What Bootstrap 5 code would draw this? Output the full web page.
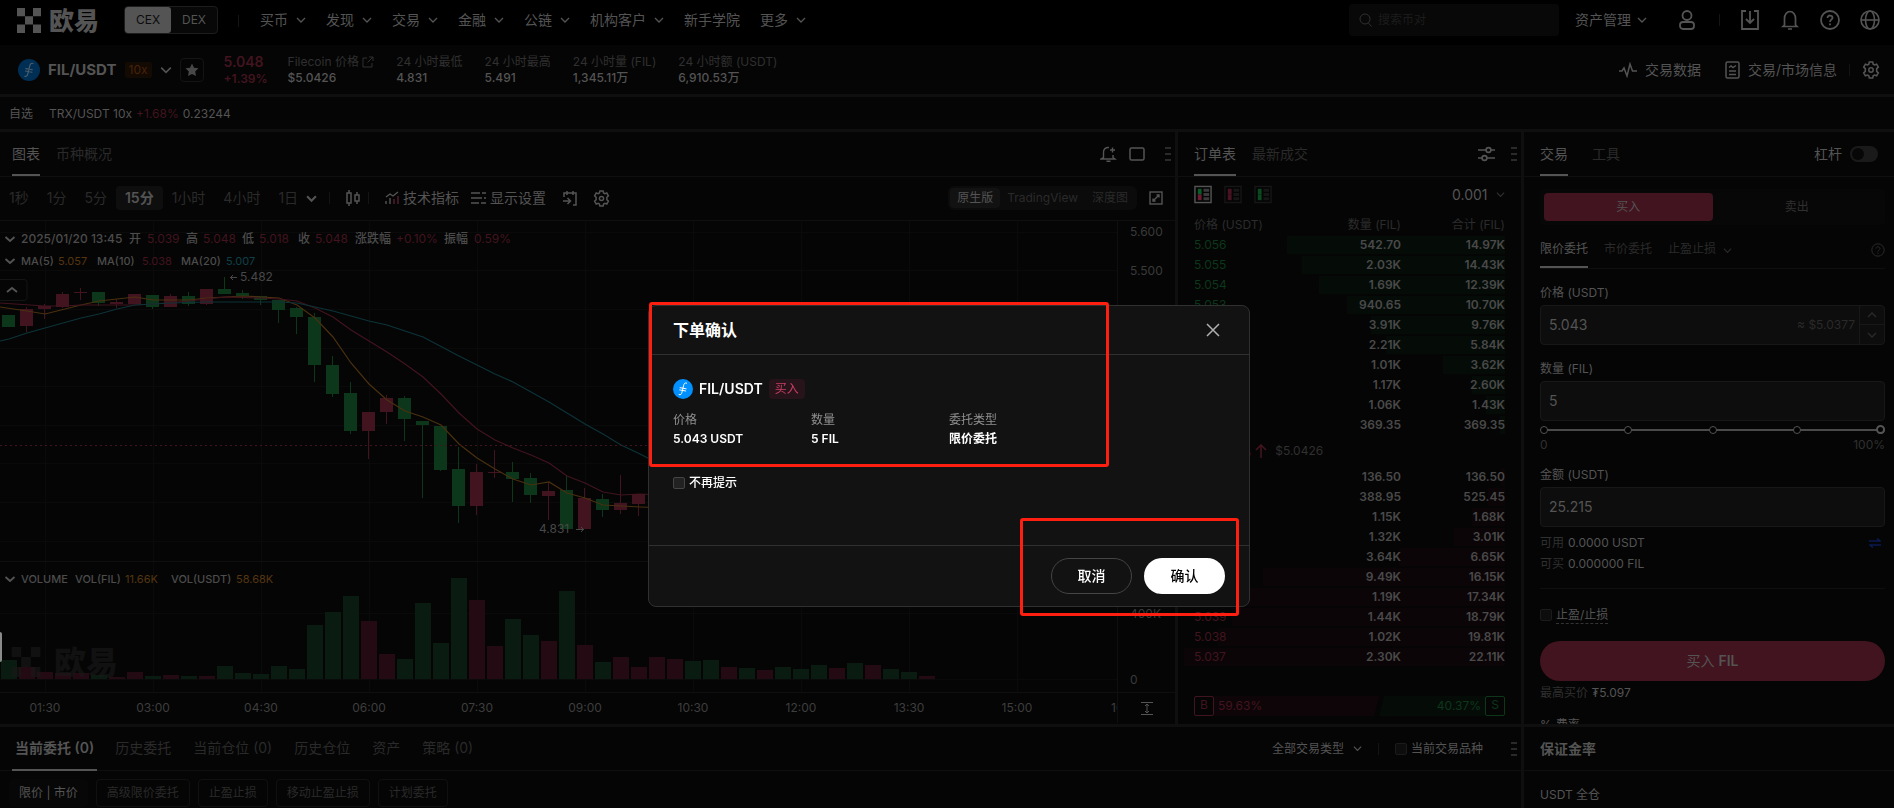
<!DOCTYPE html>
<html lang="zh-CN" data-bs-theme="dark">
<head>
<meta charset="utf-8">
<meta name="viewport" content="width=device-width, initial-scale=1">
<title>FIL/USDT 现货交易 | 欧易</title>
<link href="https://cdn.jsdelivr.net/npm/bootstrap@5.3.0/dist/css/bootstrap.min.css" rel="stylesheet">
<style>
:root{--t1:#545454;--t2:#303030;--t3:#2a2a2a;--line:#0f0f0f;--panel:#050505;--field:#0d0d0d;--up:#42141f;--down:#0c371a}
body{font:400 12px/16px Inter,"Noto Sans CJK SC",sans-serif;color:var(--t1);background:var(--line)}
button,input,select{font:inherit;color:inherit;background:none;border:0;padding:0;margin:0;outline:0}
h1,h2{color:inherit}
a{color:inherit;text-decoration:none}
svg{fill:none;flex:none}
svg:not([stroke]){stroke:currentColor}
.t2{color:var(--t2)}.t3{color:var(--t3)}.up{color:var(--up)}.down{color:var(--down)}
.f14{font-size:14px;line-height:20px}
.semi{font-weight:600}.med{font-weight:500}
.panel{background:var(--panel)}
.gap3{gap:3px}.gap6{gap:6px}.gap12{gap:12px}.gap18{gap:18px}.gap20{gap:20px}.gap22{gap:22px}
.vline{width:1px;height:12px;background:#141414}
.topbar{height:45px;background:#000;padding:0 14px 12px 17px}
.brand-word{font-size:25px;line-height:26px;font-weight:900;color:#545454}
.venue{border:1px solid #1d1d1d;border-radius:4px;background:#080808;height:28px;margin:6px 20px 0 25px}
.venue button{width:46px;color:var(--t1)}
.venue .on{background:#545454;color:#0c0c0c;border-radius:3px}
.search{width:210px;height:32px;background:#080808;border-radius:4px;padding:0 10px}
.search input::placeholder{color:#1c1c1c}
.topnav{padding:6px 0 0 5px}
.toptools{padding-top:6px}
.ticker{height:50px;padding:0 14px 0 18px}
.pairname{font-size:15px;font-weight:700}
.lev{background:#120a03;color:#4a2208;border-radius:2px;padding:0 4px}
.starbox{width:24px;height:24px;border:1px solid #141414;border-radius:4px}
.lastprice{margin:0 20px 0 4px}
.favs{height:32px;padding:1px 9px 0;margin:3px 0}
.tabs{height:44px;border-bottom:1px solid var(--line);font-size:14px;line-height:20px}
main .tabs,main .tab{height:45px}
main .tab{padding-top:2px}
.tab{height:44px;border-bottom:2px solid transparent;color:#2a2a2a;padding:0}
.tab.on{color:var(--t1);border-color:var(--t1)}
.toolbar{height:44px;border-bottom:1px solid var(--line);padding:0 12px 0 9px;font-size:14px;line-height:20px}
.spans .on{background:#0e0e0e;border-radius:4px;padding:2px 9px;margin:0 -9px;font-weight:600;color:var(--t1)}
.seg{background:#0b0b0b;border-radius:6px;padding:2px;height:24px}
.seg button{padding:0 7px;border-radius:4px;height:20px;font-size:12px;line-height:16px;color:#2a2a2a}
.seg .on{background:#121212;color:var(--t1)}
.plot svg text{stroke:none;font-size:12px}
.plot svg .small-leg text{font-size:11px}
.axis{width:58px;border-left:1px solid var(--line)}
.book{width:343px}
.trade{width:370px}
.booktable{width:323px;margin:9px 16px 0 4px;table-layout:fixed}
.booktable th{font-weight:400;color:#2c2c2c;height:22px;padding:0}
.booktable th:not(:first-child){width:104px}
.booktable td{height:20px;padding:0 0 2px;font-weight:600;color:#4a4a4a}
.booktable th:first-child,.booktable td:first-child{padding-left:12px;font-weight:400}
.booktable td:not(:first-child),.booktable th:not(:first-child){text-align:right}
.depth{background-repeat:no-repeat;background-position:right top;background-size:var(--w) 18px}
.ask{background-image:linear-gradient(#050c08,#050c08)}
.bid{background-image:linear-gradient(#0c0508,#0c0508)}
.ask td:first-child{color:var(--down)}.bid td:first-child{color:var(--up)}
.booktable .mid td{height:32px;font-weight:400}
.bs{width:20px;height:20px;border:1px solid;border-radius:2px}
.buyfill{background:#0e0508;clip-path:polygon(0 0,100% 0,calc(100% - 5px) 100%,0 100%)}
.sellfill{background:#050c08;clip-path:polygon(5px 0,100% 0,100% 100%,0 100%)}
.form{padding:12px 9px 0 16px}
.sides{background:#070707;border-radius:4px;padding:4px;height:36px}
.sides .on{background:var(--up);border-radius:4px}
.kinds{height:36px;margin-top:8px;border-bottom:1px solid var(--line)}
.kinds button{height:36px;border-bottom:2px solid transparent;color:#2a2a2a}
.kinds .on{color:var(--t1);border-color:var(--t1)}
.field{height:40px;background:var(--field);border:1px solid #181818;border-radius:4px;margin-top:4px}
.field input{padding-left:8px;font-size:14px;min-width:0}
.spin{width:25px;border-left:1px solid #181818;color:#2a2a2a}
.spin button+button{border-top:1px solid #181818}
.slider{height:18px}
.slider::before{content:"";position:absolute;left:4px;right:4px;top:8px;height:2px;background:#4a4a4a}
.slider i{position:relative;width:8px;height:8px;border:1px solid #545454;border-radius:50%;background:#000}
.slider input{position:absolute;inset:0;width:100%;height:18px;appearance:none}
.slider input::-webkit-slider-thumb{appearance:none;width:9px;height:9px;border-radius:50%;background:#000;border:2px solid #545454}
.tick{appearance:none;width:12px;height:12px;border:1px solid #1b1b1b;border-radius:2px;background:var(--field)}
.dash{border-bottom:1px dashed #333}
.submit{height:40px;border-radius:20px;background:var(--up);font-size:14px;margin-top:17px}
.toggle{appearance:none;width:28px;height:16px;border-radius:8px;background:#1a1a1a;padding:2px}
.toggle::before{content:"";display:block;width:12px;height:12px;border-radius:50%;background:#070707}
.ordertabs{gap:22px}
.ordertabs .on{padding:0 3px;margin-right:-4px}
.chips{padding:8px 9px 1px}
.chips button{height:28px;border:1px solid #101010;border-radius:4px;padding:0 10px;color:#2a2a2a}
.chips .on{background:#070707;border-color:#070707;color:var(--t1);padding:0 9px}
.pick{appearance:none}
.edge{left:0;top:632px;width:2px;height:30px;background:#8a8a8a;border-radius:0 2px 2px 0}
.modal{padding-left:4px;color:#fff}
.modal-dialog{max-width:602px;margin-top:305px}
.modal-content{background:#121212;border:1px solid #303030;border-radius:8px}
.modal-header{height:49px;padding:0 29px 0 24px;border-bottom:1px solid #303030;border-radius:0}
.modal-title{font-size:16px;line-height:24px;font-weight:700}
.modal-body{height:190px;padding:24px;flex:none}
.modal-footer{height:61px;padding:0 24px;gap:12px;border-top:1px solid #303030}
.modal-footer button{width:81px;height:36px;border-radius:18px;margin:0}
.side-tag{background:#27131a;color:#ca3f64;border-radius:4px;padding:2px 6px}
.facts{grid-template-columns:138px 138px 138px;column-gap:0;row-gap:3px;margin-top:13px}
.facts dt{font-weight:400;color:#909090}.facts dd{margin:0;font-weight:600;grid-row:2}
.modal .tick{border-color:#454545;background:#222}
.frame{border:3px solid #ff1f10;border-radius:3px;pointer-events:none}
.frame-info{left:0;top:-4px;width:460px;height:165px}
.frame-act{right:10px;bottom:-10px;width:219px;height:98px}
</style>
</head>
<body class="vh-100 overflow-hidden">
<svg width="0" height="0" class="position-absolute">
 <symbol id="chev" viewBox="0 0 10 10"><path d="M1 3l4 4 4-4" stroke-width="1.3"/></symbol>
 <symbol id="chevb" viewBox="0 0 10 10"><path d="M1 3l4 4 4-4" stroke-width="1.9"/></symbol>
 <symbol id="gear" viewBox="0 0 18 18"><path d="M7.3 1h3.4l.5 2.2 1.3.7 2.1-.7 1.7 2.9L14.700 7.700v2.600l1.600 1.600-1.700 2.900-2.100-.7-1.300.7-.5 2.200H7.300l-.5-2.200-1.300-.7-2.100.7-1.700-2.900 1.600-1.600V7.700L1.700 6.100l1.700-2.900 2.100.7 1.300-.7z" stroke-width="1.6"/><circle cx="9" cy="9" r="2.200" stroke-width="1.500"/></symbol>
 <symbol id="fil" viewBox="0 0 22 22"><circle cx="11" cy="11" r="11" fill="var(--disc)" stroke="none"/><path d="M15 4.500c-2-.8-2.900.5-3.400 3l-1.700 7c-.5 2.200-1.400 3.400-3.200 2.700M7.800 9.600l6.600 1.200M7.400 12l6.600 1.200" stroke-width="1.100" stroke-linecap="round"/></symbol>
 <symbol id="grip" viewBox="0 0 6 14"><path d="M0 1h6M0 7h6M0 13h6" stroke-width="1.800"/></symbol>
 <symbol id="okmark" viewBox="0 0 24 25"><path d="M0 0h8v8.300H0zM16 0h8v8.300h-8zM8 8.300h8v8.300H8zM0 16.600h8V25H0zM16 16.600h8V25h-8z" fill="currentColor" stroke="none"/></symbol>
</svg>

<div class="d-flex flex-column h-100">
<header class="topbar d-flex align-items-center">
 <a href="#" class="d-flex align-items-center gap-2 pt-2" aria-label="欧易"><svg width="24" height="25"><use href="#okmark"/></svg><span class="brand-word">欧易</span></a>
 <div class="venue d-flex"><button class="on">CEX</button><button>DEX</button></div>
 <span class="vline me-3 mt-2"></span>
 <nav class="topnav d-flex f14 gap20" id="mainnav"></nav>
 <div class="toptools ms-auto d-flex align-items-center">
  <label class="search d-flex align-items-center gap6"><svg width="13" height="14" viewBox="0 0 13 14" class="t2"><circle cx="6" cy="6" r="5"/><path d="M9.500 10l3 3.500"/></svg><input class="w-100" placeholder="搜索币对" aria-label="搜索币对"></label>
  <a href="#" class="f14 d-flex align-items-center gap6 ms-3 me-2">资产管理 <svg width="10" height="10"><use href="#chev"/></svg></a>
  <svg width="16" height="20" viewBox="0 0 16 20" class="ms-4 me-4" stroke="currentColor" stroke-width="1.800"><circle cx="8" cy="5.500" r="4.500"/><rect x="1" y="12" width="14" height="7" rx="3"/></svg>
  <span class="vline"></span>
  <div class="d-flex align-items-center gap20 ps-3 ms-1">
   <svg width="20" height="20" viewBox="0 0 20 20" stroke-width="1.800"><path d="M6 1H2v18h16V1h-4M10 1v12M6 9l4 4 4-4"/></svg>
   <svg width="20" height="20" viewBox="0 0 20 20" stroke-width="1.700"><path d="M4.500 15V8.500a5.500 7 0 0 1 11 0V15l1.500 1.500H3zM8 19h4"/></svg>
   <svg width="20" height="20" viewBox="0 0 20 20" stroke-width="1.800"><circle cx="10" cy="10" r="9"/><path d="M7.500 8c0-3.500 5-3 5-.3 0 1.800-2.500 2-2.500 4.200M10 13.500v1.800"/></svg>
   <svg width="20" height="20" viewBox="0 0 20 20" stroke-width="1.600"><circle cx="10" cy="10" r="9"/><ellipse cx="10" cy="10" rx="4.500" ry="9"/><path d="M1 10h18"/></svg>
  </div>
 </div>
</header>

<section class="ticker panel d-flex align-items-center">
 <svg width="22" height="22" style="--disc:#002f56;color:#4c5c68"><use href="#fil"/></svg>
 <h1 class="pairname m-0 ms-2 lh-1">FIL/USDT</h1><span class="lev ms-2">10x</span>
 <svg width="12" height="12" class="ms-2"><use href="#chev"/></svg>
 <button class="starbox ms-2 me-3 d-flex align-items-center justify-content-center" aria-label="收藏"><svg width="14" height="14" viewBox="0 0 14 14"><path d="M7 .5l2 4.200 4.500.6-3.300 3.200.8 4.600L7 11l-4 2.100.8-4.600L.5 5.300 5 4.700z" fill="#484848" stroke="none"/></svg></button>
 <div class="lastprice up semi"><div class="f14 lh-1 mb-1">5.048</div><div class="lh-1">+1.39%</div></div>
 <div class="d-flex gap22" id="stats"></div>
 <div class="ms-auto d-flex align-items-center f14">
  <svg width="18" height="16" viewBox="0 0 18 16" stroke-width="1.500"><path d="M0 9h3l2-3 3 8 3-12 2.500 7H18"/></svg><a href="#" class="ms-2 me-4">交易数据</a>
  <svg width="15" height="18" viewBox="0 0 15 18" stroke-width="1.500"><rect x="1" y="1" width="13" height="16" rx="1.500"/><path d="M4 6.500l2-1.500 2 1.500L11 4.500M4 10h7M4 13.500h7"/></svg><a href="#" class="ms-2 me-1">交易/市场信息</a>
  <span class="vline mx-2"></span><svg width="18" height="18" class="ms-1"><use href="#gear"/></svg>
 </div>
</section>

<section class="favs panel d-flex align-items-center gap-3"><span>自选</span><a href="#" class="d-flex gap-1"><span>TRX/USDT 10x</span><span class="up">+1.68%</span><span>0.23244</span></a></section>

<main class="d-flex gap3 flex-fill overflow-hidden" style="min-height:0">
 <section class="panel flex-fill d-flex flex-column overflow-hidden">
  <div class="tabs d-flex align-items-center ps-2"><div class="d-flex gap-3 ps-1"><button class="tab on">图表</button><button class="tab">币种概况</button></div>
   <div class="ms-auto d-flex align-items-center gap12 pe-1">
    <svg width="17" height="16" viewBox="0 0 17 16" stroke-width="1.400"><path d="M9 1.500C5.500 1 3.500 3.500 3.500 6v5.500L1 13h14l-2-1.500V9M6.500 15.200h4M12.500 1.500v5M10 4h5"/></svg>
    <svg width="16" height="14" viewBox="0 0 16 14" stroke-width="1.500"><rect x="1" y="1" width="14" height="12" rx="1.500"/></svg>
    <svg width="6" height="14" class="t3 ms-2"><use href="#grip"/></svg></div></div>
  <div class="toolbar d-flex align-items-center">
   <div class="spans d-flex gap18 t3 align-items-center"><button>1秒</button><button>1分</button><button>5分</button><button class="on">15分</button><button>1小时</button><button>4小时</button><button>1日</button></div>
   <svg width="11" height="11" class="ms-2 me-2"><use href="#chevb"/></svg><span class="vline ms-1"></span>
   <svg width="14" height="16" viewBox="0 0 14 16" class="ms-3 me-2" stroke-width="1.500"><path d="M3 0v3M3 13v3M11 2v3M11 11v3"/><rect x="1" y="3" width="4" height="10"/><rect x="9" y="5" width="4" height="6"/></svg><span class="vline"></span>
   <button class="ms-3 d-flex align-items-center gap-1"><svg width="14" height="14" viewBox="0 0 14 14" stroke-width="1.400"><path d="M1 6l4-3 3 2 5-4M1 13v-3M5 13V7"/><path d="M9 13V8M13 13V5" stroke="#54202e"/></svg>技术指标</button>
   <button class="ms-2 ps-1 d-flex align-items-center gap-1"><svg width="15" height="14" viewBox="0 0 15 14" stroke-width="1.500"><path d="M0 2h9M11 2h4M0 7h11M13 7h2M0 12h8M10 12h5"/></svg>显示设置</button>
   <svg width="15" height="15" viewBox="0 0 15 15" class="mx-3" stroke-width="1.500"><path d="M2 6V2h12v12h-3M5 0v4M11 0v4M1 10h7M5.500 7l3 3-3 3"/></svg>
   <svg width="17" height="17"><use href="#gear"/></svg>
   <div class="seg d-flex ms-auto me-2"><button class="on">原生版</button><button>TradingView</button><button>深度图</button></div>
   <svg width="14" height="14" viewBox="0 0 14 14" class="ms-1" stroke-width="1.400"><rect x="1" y="1" width="12" height="12"/><path d="M7.500 4H10v2.500M4 7.500V10h2.500M10 4L4 10"/></svg>
  </div>
  <div class="plot d-flex flex-fill">
   <svg id="chart" class="flex-fill" width="100" height="502" role="img" aria-label="FIL/USDT 15分钟 K线图" style="overflow:hidden"></svg>
   <svg class="axis" width="58" height="502"><g fill="#3a3a3a"><text x="12" y="15">5.600</text><text x="12" y="54">5.500</text><text x="12" y="397">400K</text><text x="12" y="463">0</text></g><path d="M0 471.500h58" stroke="#0f0f0f"/><path d="M23 481.500h12M23 493.500h12M29 483v9M27 485l2-2 2 2M27 490l2 2 2-2" stroke="#545454"/></svg>
  </div>
 </section>

 <section class="panel book d-flex flex-column">
  <div class="tabs d-flex align-items-center ps-3 pe-1"><button class="tab on">订单表</button><button class="tab ms-3">最新成交</button>
   <svg width="17" height="16" viewBox="0 0 17 16" class="ms-auto me-3" stroke-width="1.600"><path d="M0 4h8M13 4h4M0 12h4M9 12h8"/><circle cx="10.500" cy="4" r="2.400"/><circle cx="6.500" cy="12" r="2.400"/></svg><svg width="6" height="14" class="t3"><use href="#grip"/></svg></div>
  <div class="d-flex align-items-center px-3 pt-2"><div class="d-flex gap-2" id="views"></div>
   <label class="ms-auto d-flex align-items-center f14 gap-2"><select class="pick" aria-label="价格精度"><option>0.001</option></select><svg width="9" height="9" class="t2"><use href="#chev"/></svg></label></div>
  <table class="booktable"><thead><tr><th>价格 (USDT)</th><th>数量 (FIL)</th><th>合计 (FIL)</th></tr></thead><tbody id="book"></tbody></table>
  <div class="d-flex px-3 mt-auto mb-2"><span class="bs up text-center">B</span><span class="buyfill up flex-fill ps-1 pt-1 lh-1">59.63%</span><span class="sellfill down text-end pe-1 pt-1 lh-1" style="width:34%">40.37%</span><span class="bs down text-center">S</span></div>
 </section>

 <section class="panel trade overflow-hidden">
  <div class="tabs d-flex align-items-center ps-3"><button class="tab on">交易</button><button class="tab ms-4">工具</button>
   <label class="ms-auto d-flex align-items-center gap-2 me-3">杠杆<input type="checkbox" class="toggle"></label></div>
  <form class="form" onsubmit="return false">
   <div class="sides d-flex"><button class="on flex-fill w-50">买入</button><button class="flex-fill w-50 t2">卖出</button></div>
   <div class="kinds d-flex align-items-center gap-3"><button class="on">限价委托</button><button>市价委托</button><button>止盈止损 <svg width="9" height="9" class="ms-1"><use href="#chev"/></svg></button>
    <svg class="ms-auto t3" width="14" height="14" viewBox="0 0 14 14"><circle cx="7" cy="7" r="6.200"/><path d="M5 5.500c0-2.500 4-2 4 0 0 1.200-2 1.500-2 3M7 9.500v1.300"/></svg></div>
   <label for="price" class="d-block mt-3">价格 (USDT)</label>
   <div class="field d-flex align-items-center"><input id="price" class="flex-fill" value="5.043"><span class="t3 pe-1">≈ $5.0377</span>
    <div class="spin d-flex flex-column h-100"><button class="flex-fill" aria-label="增加"><svg width="10" height="10" class="d-block mx-auto" style="transform:rotate(180deg)"><use href="#chev"/></svg></button><button class="flex-fill" aria-label="减少"><svg width="10" height="10" class="d-block mx-auto"><use href="#chev"/></svg></button></div></div>
   <label for="qty" class="d-block mt-3">数量 (FIL)</label>
   <div class="field d-flex"><input id="qty" class="w-100" value="5"></div>
   <div class="slider d-flex justify-content-between align-items-center position-relative"><i></i><i></i><i></i><i></i><i></i><input type="range" value="100" aria-label="数量比例"></div>
   <div class="d-flex justify-content-between t2 pb-1" style="line-height:12px"><span>0</span><span>100%</span></div>
   <label for="amt" class="d-block" style="margin-top:12px">金额 (USDT)</label>
   <div class="field d-flex"><input id="amt" class="w-100" value="25.215"></div>
   <div class="d-flex mt-2 align-items-center"><span class="t2 me-1">可用</span>0.0000 USDT<svg width="12" height="10" viewBox="0 0 12 10" class="ms-auto me-1" stroke="#0a1a52" stroke-width="1.500"><path d="M0 3h11L8 .5M12 7H1l3 2.500"/></svg></div>
   <div class="d-flex" style="margin-top:5px"><span class="t2 me-1">可买</span>0.000000 FIL</div>
   <hr class="my-3 opacity-100" style="border-color:#0f0f0f">
   <label class="d-flex align-items-center gap-1" style="padding-top:2px"><input type="checkbox" class="tick"><span class="dash">止盈/止损</span></label>
   <button class="submit w-100">买入 <span class="semi">FIL</span></button>
   <div class="mt-1"><span class="t2">最高买价</span> ₮5.097</div>
   <div class="mt-3 d-flex"><span class="me-1">%</span>费率</div>
  </form>
 </section>
</main>

<footer class="d-flex gap3" style="margin-top:3px">
 <section class="panel flex-fill">
  <div class="tabs d-flex align-items-center ps-2 pe-1">
   <div class="ordertabs d-flex ps-1" id="ordertabs"></div>
   <label class="ms-auto d-flex align-items-center gap-2" style="font-size:12px"><select class="pick" aria-label="交易类型"><option>全部交易类型</option></select><svg width="9" height="9"><use href="#chev"/></svg></label>
   <span class="vline mx-3"></span><label class="d-flex align-items-center gap-1 me-4 pe-1" style="font-size:12px"><input type="checkbox" class="tick">当前交易品种</label><svg width="6" height="14" class="t3"><use href="#grip"/></svg></div>
  <div class="chips d-flex gap-2"><button class="on">限价 | 市价</button><button>高级限价委托</button><button>止盈止损</button><button>移动止盈止损</button><button>计划委托</button></div>
 </section>
 <section class="panel trade"><h2 class="tabs d-flex align-items-center m-0 ps-3 semi">保证金率</h2><div class="ps-3 pt-3">USDT 全仓</div></section>
</footer>
</div>
<span class="edge position-absolute"></span>

<div class="modal d-block" tabindex="-1" role="dialog" aria-labelledby="ttl">
 <div class="modal-dialog"><div class="modal-content position-relative">
  <div class="modal-header d-flex justify-content-between"><h2 class="modal-title" id="ttl">下单确认</h2><button aria-label="关闭"><svg width="14" height="14" viewBox="0 0 14 14" class="d-block" stroke="#b0b0b0" stroke-width="1.500"><path d="M1 1l12 12M13 1L1 13"/></svg></button></div>
  <div class="modal-body">
   <div class="d-flex align-items-center gap6"><svg width="20" height="20" style="--disc:#0090ff"><use href="#fil"/></svg><span class="f14 semi">FIL/USDT</span><span class="side-tag">买入</span></div>
   <dl class="facts d-grid mb-0"><dt>价格</dt><dd>5.043 USDT</dd><dt>数量</dt><dd>5 FIL</dd><dt>委托类型</dt><dd>限价委托</dd></dl>
   <label class="d-flex align-items-center gap-1 med" style="margin-top:28px"><input type="checkbox" class="tick">不再提示</label>
  </div>
  <div class="modal-footer"><button class="f14 med" style="border:1px solid #454545">取消</button><button class="f14 bg-white text-black med">确认</button></div>
  <span class="frame frame-info position-absolute"></span><span class="frame frame-act position-absolute"></span>
 </div></div>
</div>

<script src="https://cdn.jsdelivr.net/npm/bootstrap@5.3.0/dist/js/bootstrap.bundle.min.js"></script>
<script>
const $ = id => document.getElementById(id), chev = '<svg width="10" height="10"><use href="#chev"/></svg>';
$('mainnav').innerHTML = ['买币','发现','交易','金融','公链','机构客户','新手学院','更多'].map(t =>
  `<a href="#" class="d-flex align-items-center gap-2">${t}${t === '新手学院' ? '' : chev}</a>`).join('');
$('stats').innerHTML = [['Filecoin 价格 <svg width="12" height="12" viewBox="0 0 12 12"><path d="M5 2H1v9h9V7M7 1h4v4M11 1L5.500 6.500"/></svg>','$5.0426'],['24 小时最低','4.831'],['24 小时最高','5.491'],['24 小时量 (FIL)','1,345.11万'],['24 小时额 (USDT)','6,910.53万']]
  .map(([k, v]) => `<div><div class="t2">${k}</div><div class="med">${v}</div></div>`).join('');
$('ordertabs').innerHTML = ['当前委托 (0)','历史委托','当前仓位 (0)','历史仓位','资产','策略 (0)'].map((t, i) =>
  `<button class="tab ${i ? '' : 'on semi'}">${t}</button>`).join('');
$('views').innerHTML = [['#0c5a26','#6b1c32',1],['#4a1322','#4a1322',0],['#0b4a20','#0b4a20',0]].map(([a, b, on]) =>
  `<button class="me-1" aria-label="盘口视图"><svg class="d-block" width="18" height="19" viewBox="0 0 19 19" stroke="none"><rect x="1" y="1" width="17" height="17" stroke="${on ? '#545454' : '#161616'}" stroke-width="1.500"/><path d="M4 3.500h4v6H4z" fill="${a}"/><path d="M4 9.500h4v6H4z" fill="${b}"/><path d="M10 3.500h6v3h-6zM10 8h6v3h-6zM10 12.500h6v3h-6z" fill="${on ? '#3a3a3a' : '#161616'}"/></svg></button>`).join('');

// price, amount, cumulative total, depth bar length
const asks = [['5.056','542.70','14.97K',218],['5.055','2.03K','14.43K',203],['5.054','1.69K','12.39K',186],['5.053','940.65','10.70K',158],['5.052','3.91K','9.76K',134],['5.051','2.21K','5.84K',119],['5.050','1.01K','3.62K',62],['5.049','1.17K','2.60K',33],['5.048','1.06K','1.43K',19],['5.047','369.35','369.35',5]];
const bids = [['5.046','136.50','136.50',4],['5.045','388.95','525.45',17],['5.044','1.15K','1.68K',33],['5.043','1.32K','3.01K',51],['5.042','3.64K','6.65K',106],['5.041','9.49K','16.15K',242],['5.040','1.19K','17.34K',258],['5.039','1.44K','18.79K',273],['5.038','1.02K','19.81K',287],['5.037','2.30K','22.11K',321]];
const rows = (list, cls) => list.map(r => `<tr class="depth ${cls}" style="--w:${r[3]}px"><td>${r[0]}</td><td>${r[1]}</td><td>${r[2]}</td></tr>`).join('');
$('book').innerHTML = rows(asks, 'ask') +
  '<tr class="mid"><td colspan="3"><div class="d-flex align-items-center"><span class="fs-5 lh-1 up semi">5.048</span><svg class="up mx-1 me-2" width="12" height="14" viewBox="0 0 12 14" stroke-width="1.600"><path d="M6 14V1M1 6l5-5 5 5"/></svg><span class="t2">$5.0426</span></div></td></tr>' + rows(bids, 'bid');

// candles: up/down, body top, body bottom, high, low (page rows)
const K = 'g315,327,315,327 r309,326,307,332 r306,309,304,319 r294,307,292,308 r292,293,288,300 g292,303,292,306 r302,304,299,308 r294,304,294,304 g295,307,295,309 r296,307,294,307 g296,304,292,306 r289,304,289,305 g289,294,277,294 g293,296,290,299 g296,300,296,305 g300,310,300,323 g308,317,307,334 g317,365,313,382 g365,394,356,397 g393,431,382,434 r412,431,412,459 r398,412,395,424 g398,419,396,441 g421,425,421,498 g426,470,426,471 g469,506,447,523 r472,506,464,515 r472,473,450,478 g472,479,462,502 g478,495,473,503 r491,496,482,520 g490,529,476,529 r498,529,488,529 g499,510,494,517 r503,510,475,514 r494,504,494,516'.split(' ');
const V = 'g660 r667 r672 r673 r673 g675 r677 r672 g676 r675 g676 r676 g666 g673 g674 g666 g669 g625 g612 g596 r621 r654 g659 g603 g643 g578 r600 r646 g619 g635 r641 g591 r645 g662 r657 r667 r657 r659 g661 g660 r667 g668 r670 g667 g669 g665 r668 g663 r665 g669 g672 r676'.split(' ');
const MA = {
 '#4a3010':'0,307 27,311 45,314 81,305 99,301 117,299 135,297 153,300 189,300 207,298 243,296 279,298 297,305 315,318 333,337 351,363 369,384 387,400 405,411 423,417 441,425 459,444 477,458 495,469 513,479 531,485 549,482 567,493 585,498 603,505 640,507 700,509',
 '#42141f':'0,303 45,306 63,306 81,305 135,305 153,304 189,301 207,299 225,297 261,298 279,299 297,301 315,308 333,317 351,330 387,352 405,364 423,377 441,394 459,413 477,429 495,440 513,448 531,455 549,463 567,476 585,483 603,492 621,495 640,494 700,497',
 '#0d3338':'0,341 9,339 27,333 81,318 99,314 117,309 135,305 153,304 171,303 207,302 279,302 297,303 315,307 333,311 369,321 387,325 423,337 459,356 495,374 513,382 549,402 567,413 585,424 603,434 621,445 640,454 700,485'};
const col = c => c === 'g' ? '#0c371a' : '#42141f', vol = c => c === 'g' ? '#0a1c12' : '#240b13';
let s = '<g transform="translate(0,-221)"><g stroke="#0a0a0a">';
for (let i = 0; i < 10; i++) s += `<path d="M${45 + 108 * i}.500 221V692"/>`;
[232,270,309,348,386,425,463,502,541,613,679].forEach(y => s += `<path d="M0 ${y}.500H1894"/>`);
s += '</g><path d="M0 561.500H1894M0 692.500H1894" stroke="#0f0f0f"/>';
V.forEach((v, i) => s += `<rect x="${1 + 18 * i}" y="${v.slice(1)}" width="16" height="${679 - v.slice(1)}" fill="${vol(v[0])}" stroke="none"/>`);
s += '<g opacity=".6"><svg x="10" y="647" width="32" height="30" color="#191919"><use href="#okmark" width="32" height="30"/></svg><text x="54" y="674" fill="#191919" style="font-size:32px;font-weight:900">欧易</text></g>';
K.forEach((k, i) => { const [t, b, h, l] = k.slice(1).split(',').map(Number), x = 2 + 18 * i;
  s += `<rect x="${x}" y="${t}" width="13" height="${b - t}" fill="${col(k[0])}" stroke="none"/><path d="M${x + 6.5} ${h}V${l}" stroke="${col(k[0])}"/>`; });
for (const c in MA) s += `<polyline points="${MA[c]}" stroke="${c}" stroke-width="1.200"/>`;
s += '<path d="M0 445.500H1894" stroke="#42141f" stroke-dasharray="2 3"/>';
const leg = (y, parts) => { s += `<path d="M5.500 ${y - 6}l4.500 4 4.500-4" stroke="#545454" stroke-width="1.800"/>` + parts.map(([x, t, c]) => `<text x="${x}" y="${y}" fill="${c || '#4c4c4c'}" ${c ? '' : 'font-weight="500"'}>${t}</text>`).join(''); };
const R = '#42141f', O = '#553610';
leg(243, [[21,'2025/01/20 13:45'],[129,'开'],[147,'5.039',R],[186,'高'],[203,'5.048',R],[242,'低'],[259,'5.018',R],[298,'收'],[315,'5.048',R],[355,'涨跌幅'],[396,'+0.10%',R],[444,'振幅'],[474,'0.59%',R]]);
s += '<g class="small-leg">';
leg(265, [[21,'MA(5)'],[58,'5.057',O],[97,'MA(10)'],[142,'5.038',R],[181,'MA(20)'],[226,'5.007','#0f4048']]);
leg(583, [[21,'VOLUME'],[75,'VOL(FIL)'],[125,'11.66K',O],[171,'VOL(USDT)'],[236,'58.68K',O]]);
s += '</g><rect x="-4" y="279.500" width="31" height="21" rx="3" fill="#050505" stroke="#141414"/><path d="M7 292l5-4 5 4" stroke="#545454" stroke-width="1.800"/>';
s += '<g fill="#484848"><text x="240" y="281">5.482</text><text x="539" y="533">4.831</text></g><path d="M237 277.500h-7M233 275l-2.500 2.500 2.500 2.500M576 529.500h8M581 527l2.500 2.500-2.500 2.500" stroke="#484848"/>';
['01:30','03:00','04:30','06:00','07:30','09:00','10:30','12:00','13:30','15:00'].forEach((t, i) => s += `<text x="${45 + 108 * i}" y="712" text-anchor="middle" fill="#3e3e3e">${t}</text>`);
s += '<text x="1111" y="712" fill="#3e3e3e">16:30</text></g>';
$('chart').innerHTML = s;
</script>
</body>
</html>
